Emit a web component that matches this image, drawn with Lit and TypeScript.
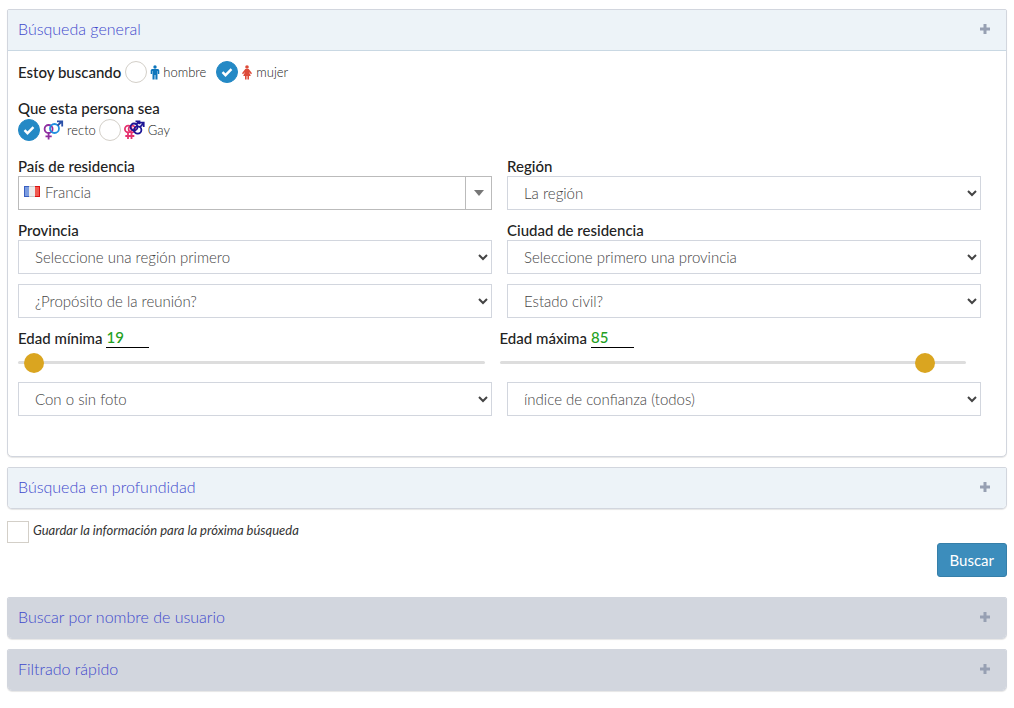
import { LitElement, html, css, svg, nothing } from "lit";
import { customElement, property, state } from "lit/decorators.js";

@customElement("search-panel")
class SearchPanel extends LitElement {
  @property() heading = "";
  @property({ type: Boolean }) open = false;
  @property({ type: Boolean }) solid = false;

  static styles = css`
    :host {
      display: block;
    }
    .box {
      border: 1px solid #d2d6de;
      border-radius: 2px 2px 5px 5px;
      background: #fff;
      box-shadow: 0 1px 1px rgba(0, 0, 0, 0.1);
      overflow: hidden;
    }
    .head {
      box-sizing: border-box;
      display: flex;
      align-items: center;
      justify-content: space-between;
      height: 40px;
      padding: 0 15px 2px 10px;
      background: #edf3f8;
    }
    .open .head {
      height: 41px;
      border-bottom: 1px solid #c9d8e3;
    }
    .solid .head {
      background: #d2d6de;
    }
    .title {
      margin: 0;
      font-size: 16px;
      line-height: 20px;
      font-weight: 300;
    }
    .title a {
      color: #4048cc;
      text-decoration: none;
    }
    .toggle {
      display: flex;
      padding: 0;
      border: 0;
      background: none;
      color: #97a0b3;
      cursor: pointer;
    }
    .body {
      padding: 10px;
    }
  `;

  render() {
    return html`
      <section class="box ${this.open ? "open" : ""} ${this.solid ? "solid" : ""}">
        <header class="head">
          <h3 class="title"><a href="#">${this.heading}</a></h3>
          <button class="toggle" type="button" aria-label=${this.heading}>
            <svg width="12" height="12" viewBox="0 0 12 12">
              <path d="M4.500 1h3v3.500H11v3H7.500V11h-3V7.500H1v-3h3.500z" fill="currentColor" />
            </svg>
          </button>
        </header>
        ${this.open ? html`<div class="body"><slot></slot></div>` : nothing}
      </section>
    `;
  }
}

const man = svg`<svg width="10" height="15" viewBox="0 0 10 15">
  <g fill="#0e76bc"><circle cx="5" cy="2" r="1.700"/>
  <path d="M2.200 4h5.600Q9.300 4 9.300 5.500V9H7.900V6H7.500v8.500H5.400V10h-.8v4.500H2.500V6h-.4v3H.7V5.500Q.7 4 2.200 4z"/></g></svg>`;

const woman = svg`<svg width="12" height="15" viewBox="0 0 12 15">
  <g fill="#dd4b39"><circle cx="6" cy="2" r="1.800"/>
  <path d="M4.300 4h3.400L11 8.300l-1 .9-2-2.300L9.800 11H8v3.500H6.400V11h-.8v3.500H4V11H2.200L4 6.900 2 9.200l-1-.9z"/></g></svg>`;

const straight = svg`<svg width="21" height="20" viewBox="0 0 21 20">
  <g fill="none" stroke-width="1.800">
    <circle cx="5.600" cy="9" r="4" stroke="#8e2fa0"/>
    <path d="M5.600 13v6.500M2.500 16.300h6.200" stroke="#8e2fa0"/>
    <circle cx="11.500" cy="8.500" r="4.500" stroke="#1f8fe0"/>
    <path d="M14.700 5.500l4-4M14 1.300h5.200V6.500" stroke="#2b50a8"/>
  </g></svg>`;

const gay = svg`<svg width="21" height="20" viewBox="0 0 21 20">
  <g fill="none" stroke-width="1.800">
    <g stroke="#e5336f"><circle cx="4.300" cy="9" r="3.400"/><circle cx="8" cy="9" r="3.400"/>
    <path d="M4 12.500V19M7.500 12.500V19M1.300 16h9"/></g>
    <g stroke="#1d1596"><circle cx="10" cy="7" r="3.500"/><circle cx="13.700" cy="10" r="3.700"/>
    <path d="M12.300 4.500l3-3M11.500 1.300h4v3M16.200 7l3.300-4M15.500 2.600h4.200V7"/></g>
  </g></svg>`;

const flag = svg`<svg class="flag" width="16" height="11" viewBox="0 0 16 11">
  <path d="M0 0h6v11H0z" fill="#7b9ce0"/><path d="M5 0h6v11H5z" fill="#ececec"/>
  <path d="M11 0h5v11h-5z" fill="#ef5a50"/>
  <path d="M0 .5h5M.5 0v11M0 10.500h5" stroke="#3a5fc0" fill="none"/>
  <path d="M5 .5h6M5 10.500h6" stroke="#c9c9c9"/>
  <path d="M11 .5h5M15.500 0v11M11 10.500h5" stroke="#dc1010" fill="none"/></svg>`;

@customElement("app-root")
class AppRoot extends LitElement {
  @state() private minAge = 19;
  @state() private maxAge = 85;

  static styles = css`
    * {
      box-sizing: border-box;
    }
    :host {
      display: block;
      padding: 9px 7px;
      background: #fff;
      color: #333;
      font-family: Lato, "Open Sans", sans-serif;
      font-size: 14px;
      line-height: 20px;
    }
    form {
      display: flex;
      flex-direction: column;
      gap: 10px;
    }
    .line {
      display: flex;
      align-items: center;
    }
    .name {
      display: block;
      margin: 0;
      padding: 0;
      font-size: 15px;
      line-height: 20px;
      font-weight: 500;
      color: #222;
    }
    fieldset {
      margin: 0 0 15px;
      padding: 0;
      border: 0;
      min-width: 0;
    }
    fieldset > .line {
      padding-top: 1px;
    }
    .name + .tick {
      margin-left: 4px;
    }
    .tick {
      appearance: none;
      flex: none;
      width: 22px;
      height: 22px;
      margin: 0;
      border: 1px solid #d3cfc8;
      background: #fff center / 22px 22px no-repeat;
      background-origin: border-box;
    }
    .tick[type="radio"] {
      border-radius: 50%;
    }
    .tick:checked {
      border-color: #2489c5;
      background-color: #2489c5;
      background-image: url("data:image/svg+xml,%3Csvg xmlns='http://www.w3.org/2000/svg' viewBox='0 0 22 22'%3E%3Cpath d='M6.500 11.200l3 3 6-6' fill='none' stroke='white' stroke-width='2.400'/%3E%3C/svg%3E");
    }
    .option {
      display: flex;
      align-items: center;
      gap: 3px;
      padding-left: 3px;
      font-size: 13px;
      font-weight: 300;
      color: #222;
    }
    .wide {
      margin-right: 10px;
    }
    .near {
      margin-right: 3px;
    }
    .grid {
      display: grid;
      grid-template-columns: 1fr 1fr;
      gap: 10px 15px;
      padding-right: 15px;
    }
    .ages {
      display: grid;
      grid-template-columns: 1fr 1fr;
      gap: 15px;
      padding: 9px 30px 10px 0;
    }
    select {
      display: block;
      width: 100%;
      height: 34px;
      padding: 6px 12px;
      border: 1px solid #d2d6de;
      border-radius: 0;
      background-color: #fff;
      color: #444;
      font: 300 15px/20px Lato, "Open Sans", sans-serif;
    }
    .country {
      display: grid;
      align-items: center;
    }
    .country > * {
      grid-area: 1 / 1;
    }
    .country select {
      appearance: none;
      padding: 4px 26px 6px;
      border-color: #bbb;
    }
    .flag {
      z-index: 1;
      margin: 0 0 4px 6px;
      pointer-events: none;
    }
    .arrow {
      z-index: 1;
      justify-self: end;
      display: grid;
      place-items: center;
      width: 27px;
      height: 34px;
      border: 1px solid #bbb;
      pointer-events: none;
    }
    .age {
      display: flex;
      align-items: flex-end;
      gap: 4px;
      height: 21px;
    }
    .number {
      width: 43px;
      height: 21px;
      padding: 0;
      border: 0;
      border-bottom: 1px solid #000;
      outline: 0;
      background: none;
      color: #22a022;
      font: 500 15px/20px Lato, "Open Sans", sans-serif;
      appearance: textfield;
    }
    .number::-webkit-inner-spin-button {
      appearance: none;
    }
    .range {
      appearance: none;
      display: block;
      width: 100%;
      height: 20px;
      margin: 4px 0 0;
      background: none;
    }
    .range::-webkit-slider-runnable-track {
      height: 3px;
      border-radius: 2px;
      background: #ddd;
    }
    .range::-webkit-slider-thumb {
      appearance: none;
      width: 20px;
      height: 20px;
      margin-top: -8px;
      border-radius: 50%;
      background: #daa520;
    }
    .last {
      padding-bottom: 30px;
    }
    .save {
      gap: 4px;
      margin-top: 1px;
      font-size: 13px;
      font-style: italic;
    }
    .save label {
      padding-bottom: 3px;
    }
    .submit {
      align-self: flex-end;
      height: 34px;
      margin: -10px 0 10px;
      padding: 0 12px;
      border: 1px solid #367fa9;
      border-radius: 3px;
      background: #3c8dbc;
      color: #fff;
      font: 400 15px/20px Lato, "Open Sans", sans-serif;
    }
  `;

  private choice(id: string, text: string) {
    return html`<select id=${id} aria-label=${text}><option>${text}</option></select>`;
  }

  private field(id: string, label: string, text: string) {
    return html`<div>
      <label class="name" for=${id}>${label}</label>
      <select id=${id}><option>${text}</option></select>
    </div>`;
  }

  private age(id: string, label: string, value: number, change: (n: number) => void) {
    const update = (e: Event) => change(Number((e.target as HTMLInputElement).value));
    return html`<div>
      <div class="age">
        <label class="name" for=${id}>${label}</label>
        <input class="number" id=${id} type="number" .value=${String(value)} @change=${update} />
      </div>
      <input class="range" type="range" aria-label=${label} min="18" max="90" .value=${String(value)} @input=${update} />
    </div>`;
  }

  render() {
    return html`
      <form @submit=${(e: Event) => e.preventDefault()}>
        <search-panel heading="Búsqueda general" open>
          <fieldset class="line" aria-label="Estoy buscando">
            <span class="name">Estoy buscando</span>
            <input class="tick" type="radio" name="sex" id="man" />
            <label class="option wide" for="man">${man} hombre</label>
            <input class="tick" type="radio" name="sex" id="woman" checked />
            <label class="option" for="woman">${woman} mujer</label>
          </fieldset>
          <fieldset>
            <legend class="name">Que esta persona sea</legend>
            <div class="line">
              <input class="tick" type="radio" name="kind" id="straight" checked />
              <label class="option near" for="straight">${straight} recto</label>
              <input class="tick" type="radio" name="kind" id="gay" />
              <label class="option" for="gay">${gay} Gay</label>
            </div>
          </fieldset>
          <div class="grid">
            <div>
              <label class="name" for="country">País de residencia</label>
              <div class="country">
                <select id="country"><option>Francia</option></select>
                ${flag}
                <span class="arrow">
                  <svg width="10" height="6" viewBox="0 0 10 6"><path d="M0 0h10L5 6z" fill="#777" /></svg>
                </span>
              </div>
            </div>
            ${this.field("region", "Región", "La región")}
            ${this.field("province", "Provincia", "Seleccione una región primero")}
            ${this.field("city", "Ciudad de residencia", "Seleccione primero una provincia")}
            ${this.choice("purpose", "¿Propósito de la reunión?")}
            ${this.choice("status", "Estado civil?")}
          </div>
          <div class="ages">
            ${this.age("min", "Edad mínima", this.minAge, (n) => (this.minAge = n))}
            ${this.age("max", "Edad máxima", this.maxAge, (n) => (this.maxAge = n))}
          </div>
          <div class="grid last">
            ${this.choice("photo", "Con o sin foto")}
            ${this.choice("trust", "índice de confianza (todos)")}
          </div>
        </search-panel>
        <search-panel heading="Búsqueda en profundidad"></search-panel>
        <div class="line save">
          <input class="tick" type="checkbox" id="save" />
          <label for="save">Guardar la información para la próxima búsqueda</label>
        </div>
        <button class="submit" type="submit">Buscar</button>
        <search-panel heading="Buscar por nombre de usuario" solid></search-panel>
        <search-panel heading="Filtrado rápido" solid></search-panel>
      </form>
    `;
  }
}
